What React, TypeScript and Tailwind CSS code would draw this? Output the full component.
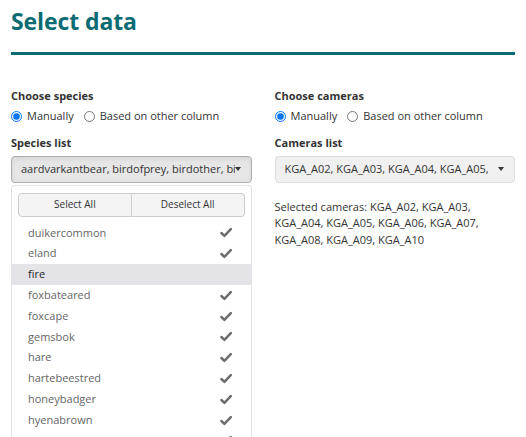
import React, { useState } from "react";

const species = [
  "duikercommon",
  "eland",
  "fire",
  "foxbateared",
  "foxcape",
  "gemsbok",
  "hare",
  "hartebeestred",
  "honeybadger",
  "hyenabrown",
  "impalacommon",
];

const Check = () => (
  <svg width="12" height="11" viewBox="0 0 12 11" className="text-[#6e6e6e]">
    <path d="M1.4 6 L4.4 8.9 L10.8 2.2" fill="none" stroke="currentColor" strokeWidth="2.5" strokeLinecap="round" strokeLinejoin="round" />
  </svg>
);

const Caret = () => (
  <span className="ml-auto h-0 w-0 shrink-0 border-x-[3.5px] border-t-[4px] border-x-transparent border-t-[#333]" />
);

const RadioRow = ({ name }: { name: string }) => {
  const [mode, setMode] = useState("manual");
  return (
    <div className="mt-[4px] flex items-center gap-[10px] text-[11px] text-[#333]">
      <label className="flex items-center gap-[5px]">
        <input
          type="radio"
          name={name}
          checked={mode === "manual"}
          onChange={() => setMode("manual")}
          className="m-0 h-[11px] w-[11px]"
        />
        Manually
      </label>
      <label className="flex items-center gap-[5px]">
        <input
          type="radio"
          name={name}
          checked={mode === "other"}
          onChange={() => setMode("other")}
          className="m-0 h-[11px] w-[11px]"
        />
        Based on other column
      </label>
    </div>
  );
};

export default function App() {
  return (
    <div
      className="h-[437px] overflow-hidden bg-white px-[11px] text-[#333]"
      style={{ fontFamily: '"Open Sans", "Noto Sans", sans-serif' }}
    >
      <h1 className="pt-[6px] text-[23px] font-bold leading-[30px] tracking-[-0.1px] text-[#0b6b72]">Select data</h1>
      <div className="mt-[16px] h-[3px] bg-[#0b6b72]" />

      <div className="mt-[33px] grid grid-cols-2 gap-[23px]">
        <div>
          <div className="text-[11px] font-bold leading-[16px]">Choose species</div>
          <RadioRow name="species" />
          <div className="mt-[10px] text-[11px] font-bold leading-[16px]">Species list</div>
          <div className="mt-[5px] flex h-[27px] items-center rounded-[4px] border border-[#adadad] bg-[#e6e6e6] pl-[9px] pr-[10px] text-[11px] shadow-[inset_0_2px_4px_rgba(0,0,0,0.08)]">
            <span className="overflow-hidden whitespace-nowrap pr-[6px]">
              aardvarkantbear, birdofprey, birdother, birdofp
            </span>
            <Caret />
          </div>
          <div className="mt-[2px] rounded-t-[4px] border border-b-0 border-[#e4e4e4] pt-[7px]">
            <div className="flex px-[6px]">
              <button className="h-[24px] flex-1 rounded-l-[4px] border border-[#ccc] bg-[#f4f4f4] text-[10px] text-[#333]">
                Select All
              </button>
              <button className="h-[24px] flex-1 rounded-r-[4px] border border-l-0 border-[#ccc] bg-[#f4f4f4] text-[10px] text-[#333]">
                Deselect All
              </button>
            </div>
            <ul className="mt-[6px]">
              {species.map((s) => (
                <li
                  key={s}
                  className={`flex h-[20.8px] items-center pl-[16px] pr-[19px] text-[11px] ${
                    s === "fire" ? "bg-[#e4e4e8] text-[#262626]" : "text-[#666]"
                  }`}
                >
                  <span>{s}</span>
                  <span className="ml-auto">{s !== "fire" && <Check />}</span>
                </li>
              ))}
            </ul>
          </div>
        </div>

        <div>
          <div className="text-[11px] font-bold leading-[16px]">Choose cameras</div>
          <RadioRow name="cameras" />
          <div className="mt-[10px] text-[11px] font-bold leading-[16px]">Cameras list</div>
          <div className="mt-[5px] flex h-[27px] items-center rounded-[4px] border border-[#dcdcdc] bg-[#f0f0f0] pl-[9px] pr-[10px] text-[11px]">
            <span className="overflow-hidden whitespace-nowrap">KGA_A02, KGA_A03, KGA_A04, KGA_A05,</span>
            <Caret />
          </div>
          <p className="mt-[16px] text-[11px] leading-[16.5px]">
            Selected cameras: KGA_A02, KGA_A03, KGA_A04, KGA_A05, KGA_A06, KGA_A07, KGA_A08, KGA_A09, KGA_A10
          </p>
        </div>
      </div>
    </div>
  );
}
